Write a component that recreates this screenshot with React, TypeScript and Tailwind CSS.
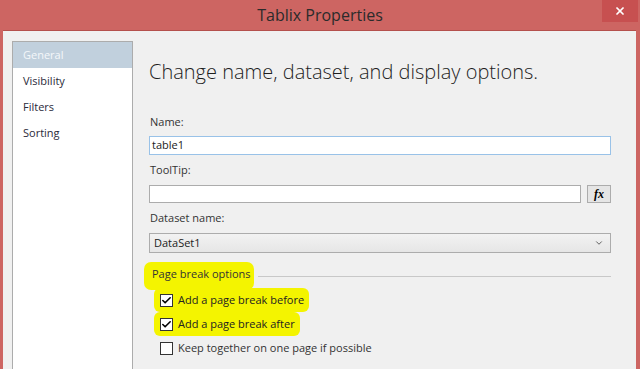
import { X, ChevronDown, Check } from "lucide-react";

const navItems = ["General", "Visibility", "Filters", "Sorting"];

const CheckBox = ({ checked }: { checked: boolean }) => (
  <span className="flex h-[13px] w-[13px] items-center justify-center border border-[#333333] bg-white">
    {checked && <Check className="h-[11px] w-[11px] text-black" strokeWidth={3.5} />}
  </span>
);

const App = () => {
  return (
    <div className="flex h-[369px] w-[640px] flex-col overflow-hidden bg-[#cd6562] font-['Open_Sans',sans-serif] text-[11px] text-[#222]">
      {/* title bar */}
      <div className="relative flex h-[30px] shrink-0 items-center justify-center">
        <span className="text-[16px] text-[#2b2b2b]">Tablix Properties</span>
        <div className="absolute right-[2px] top-0 flex h-[22px] w-[36px] items-center justify-center bg-[#c75050]">
          <X className="h-[12px] w-[12px] text-white" strokeWidth={3.5} />
        </div>
      </div>

      <div className="ml-[3px] mr-[4px] flex flex-1 border-t border-[#b4504c] bg-[#f0f0f0]">
        {/* side nav */}
        <div className="mb-[-20px] ml-[9px] mt-[10px] w-[121px] shrink-0 border border-[#acacac] bg-white">
          {navItems.map((item, i) => (
            <div
              key={item}
              className={
                i === 0
                  ? "flex h-[26px] items-center bg-[#c1d0dd] pl-[10px] text-[#f4f7fa]"
                  : "flex h-[26px] items-center pl-[10px] text-[#2a2a3a]"
              }
            >
              {item}
            </div>
          ))}
        </div>

        <div className="flex-1 pl-[16px] pr-[25px]">
          <h1 className="mt-[27px] text-[20px] font-light leading-[28px] text-[#1e1e1e]">
            Change name, dataset, and display options.
          </h1>

          <div className="mt-[28px] pl-[1px] leading-[16px] text-[#333]">Name:</div>
          <div className="mt-[6px] flex h-[19px] items-center border border-[#99c2e8] bg-white pl-[2px] text-[#222]">
            table1
          </div>

          <div className="mt-[7px] pl-[1px] leading-[16px] text-[#333]">ToolTip:</div>
          <div className="mt-[7px] flex h-[18px] gap-[6px]">
            <div className="flex-1 border border-[#acacac] bg-white" />
            <div className="flex w-[24px] items-center justify-center border border-[#acacac] bg-[#e5e5e5] font-['Liberation_Serif',serif] text-[12px] font-bold italic text-black">
              fx
            </div>
          </div>

          <div className="mt-[7px] pl-[1px] leading-[16px] text-[#333]">Dataset name:</div>
          <div className="mt-[7px] flex h-[20px] items-center justify-between border border-[#acacac] bg-gradient-to-b from-[#f2f2f2] to-[#e6e6e6] pl-[4px] pr-[6px] text-[#222]">
            <span>DataSet1</span>
            <ChevronDown className="h-[10px] w-[10px] text-[#444]" strokeWidth={2} />
          </div>

          {/* page break group */}
          <div className="mt-[15px] flex h-[16px] items-center">
            <span className="ml-[-5px] rounded-[7px] bg-[#f4f400] pb-[7px] pl-[8px] pr-[3px] pt-[4px] text-[#333]">Page break options</span>
            <div className="ml-[4px] h-px flex-1 bg-[#c8c8c8]" />
          </div>

          <div className="mt-[4px] pl-[5px]">
            <div className="flex h-[24px] items-center">
              <span className="flex items-center gap-[5px] rounded-[6px] bg-[#f4f400] py-[4px] pl-[6px] pr-[5px]">
                <CheckBox checked />
                <span>Add a page break before</span>
              </span>
            </div>
            <div className="flex h-[24px] items-center">
              <span className="flex items-center gap-[5px] rounded-[6px] bg-[#f4f400] py-[4px] pl-[4px] pr-[5px]">
                <span className="pl-[2px]">
                  <CheckBox checked />
                </span>
                <span>Add a page break after</span>
              </span>
            </div>
            <div className="flex h-[24px] items-center pl-[6px]">
              <span className="flex items-center gap-[5px]">
                <CheckBox checked={false} />
                <span className="text-[#333]">Keep together on one page if possible</span>
              </span>
            </div>
          </div>
        </div>
      </div>
    </div>
  );
};

export default App;
